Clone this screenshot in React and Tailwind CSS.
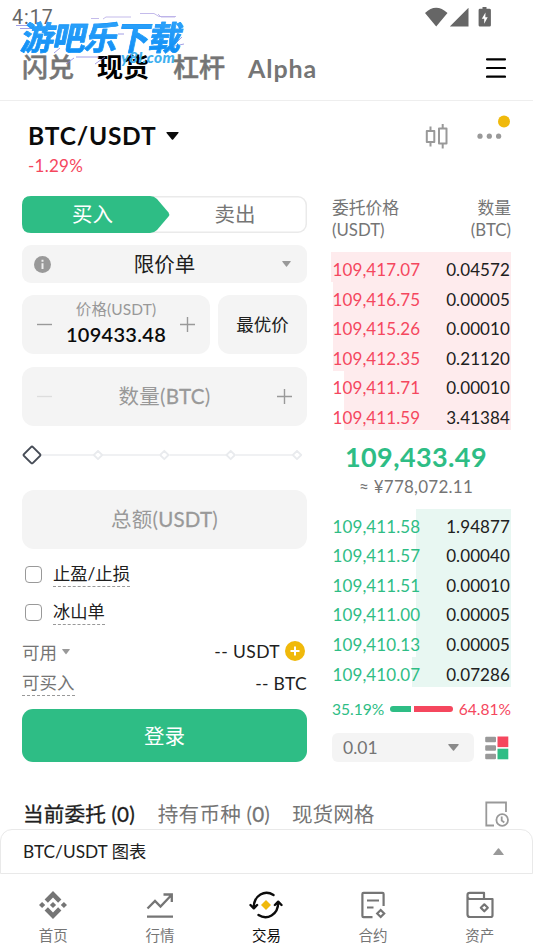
import React from "react";

const asks = [
  ["109,417.07", "0.04572", "w-[180px]"],
  ["109,416.75", "0.00005", "w-[178px]"],
  ["109,415.26", "0.00010", "w-[178px]"],
  ["109,412.35", "0.21120", "w-[178px]"],
  ["109,411.71", "0.00010", "w-[167px]"],
  ["109,411.59", "3.41384", "w-[167px]"],
];

const bids = [
  ["109,411.58", "1.94877", "w-[95px]"],
  ["109,411.57", "0.00040", "w-[95px]"],
  ["109,411.51", "0.00010", "w-[95px]"],
  ["109,411.00", "0.00005", "w-[95px]"],
  ["109,410.13", "0.00005", "w-[95px]"],
  ["109,410.07", "0.07286", "w-[99px]"],
];

function Caret({ w, h, className = "", up = false }) {
  return (
    <svg width={w} height={h} viewBox="0 0 12 8" preserveAspectRatio="none" className={className}>
      <path
        d={up ? "M1 8h10q1.2 0 .5-1L6.6.6Q6 0 5.4.6L.5 7Q-.2 8 1 8z" : "M1 0h10q1.2 0 .5 1L6.6 7.4Q6 8 5.4 7.4L.5 1Q-.2 0 1 0z"}
        fill="currentColor"
      />
    </svg>
  );
}

function Sign({ plus = false, className = "" }) {
  return (
    <svg width="15" height="15" viewBox="0 0 15 15" className={className}>
      <path d={plus ? "M0 7.5h15M7.5 0v15" : "M0 7.5h15"} stroke="currentColor" strokeWidth="1.4" fill="none" />
    </svg>
  );
}

function Watermark() {
  return (
    <div className="pointer-events-none absolute left-0 top-0 h-[70px] w-[200px]">
      <svg width="200" height="70" viewBox="0 0 200 70" fill="none" className="absolute left-0 top-0">
        <g stroke="#b5a9e6" strokeWidth="0.8">
          <path d="M91 18.500h8M103 19l3-2h25M140 13.500h14l5 3h17M158 14l3 3h14" />
          <path d="M16 25.500h18M20 28.500h18M54 53l6-5M76 57h23M74 58l-8 6M105 57l-10 7M182 37l-7 7M184 44l-14 3M118 34h6" stroke="#8a86df" />
        </g>
      </svg>
      <div className="absolute left-[18px] top-[17px] flex origin-bottom -skew-x-12 bg-gradient-to-b from-[#2fa4fb] to-[#078cf5] bg-clip-text text-[33px] font-bold leading-[40px] tracking-[-1.100px] text-transparent [-webkit-text-stroke:0.600px_#1797f8]">
        游吧乐下载
      </div>
      <div className="absolute left-[121px] top-[49px] text-[15.500px] font-black italic leading-[16px] tracking-[0.400px] text-[#3fb0ef]">
        y8l.com
      </div>
    </div>
  );
}

function Book({ rows, side }) {
  const red = side === "ask";
  return (
    <div className="flex w-[180px] flex-col">
      {rows.map(([p, q, w]) => (
        <div key={p} className="grid h-[29.600px]">
          <div className={`col-start-1 row-start-1 h-full justify-self-end ${w} ${red ? "bg-[#feebed]" : "bg-[#e8f7f2]"}`} />
          <div className="col-start-1 row-start-1 flex justify-between pt-[6px] pl-[1.500px] pr-[1px] text-[17px] leading-[24px]">
            <span className={`tracking-[0.100px] ${red ? "text-[#f5475e]" : "text-[#2fbd85]"}`}>{p}</span>
            <span className="tracking-[0.100px] text-[#202020]">{q}</span>
          </div>
        </div>
      ))}
    </div>
  );
}

function CheckRow({ label }) {
  return (
    <div className="flex h-[38px] items-center pl-[3px]">
      <span className="h-[17px] w-[17px] rounded-[4px] border-[1.500px] border-[#999]" />
      <span className="ml-[11px] h-[25px] border-b border-dashed border-[#999] text-[17.300px] leading-[23px] text-[#202020]">{label}</span>
    </div>
  );
}

const navIcons = {
  home: (
    <svg width="28" height="28" viewBox="0 0 28 28" fill="#757575">
      <path d="M14 0l8.400 8.400-3.300 3.300L14 6.600l-5.100 5.100-3.300-3.300zM14 28l-8.400-8.400 3.300-3.300 5.100 5.100 5.100-5.100 3.300 3.300zM0 14l3.100-3.100L6.200 14l-3.100 3.100zM10.900 14l3.100-3.100 3.100 3.100-3.100 3.100zM21.800 14l3.100-3.100L28 14l-3.100 3.100z" />
    </svg>
  ),
  market: (
    <svg width="28" height="28" viewBox="0 0 28 28" fill="none" stroke="#757575" strokeWidth="2.300">
      <path d="M1.500 17.500L9 10l5.500 5.500L25 4.500M17.500 3.500h8.300v7.500M1 25.700h26" />
    </svg>
  ),
  trade: (
    <svg width="34" height="28" viewBox="0 0 34 28" fill="none" stroke="#0b0b0b" strokeWidth="2.400" strokeLinecap="round" strokeLinejoin="round">
      <path d="M24.500 4C16 -1.500 4.800 4 4.800 16.500M1.500 14l3.300 3.300 3.300-3.300M9.500 24C18 29.500 29.200 24 29.200 11.500M25.900 14l3.300-3.300 3.300 3.300" />
      <path d="M17 9l5 5-5 5-5-5z" fill="#f0b90b" stroke="none" />
    </svg>
  ),
  futures: (
    <svg width="28" height="28" viewBox="0 0 28 28" fill="none" stroke="#757575" strokeWidth="2.200">
      <path d="M13.500 26.200H4.500Q3.400 26.200 3.400 25.100V3Q3.400 1.900 4.500 1.900H23.500Q24.600 1.900 24.600 3V15M8 9.500h12M8 16.500h6.500" />
      <path d="M21.700 19l3.500 3.500-3.500 3.500-3.500-3.500z" />
    </svg>
  ),
  wallet: (
    <svg width="28" height="28" viewBox="0 0 28 28" fill="none" stroke="#757575" strokeWidth="2.200" strokeLinejoin="round">
      <path d="M1.500 8V4Q1.500 1.800 3.700 1.800H18V7.500M1.500 5.500Q1.500 8 4 8H26.500V24.300Q26.500 26 24.800 26H4Q1.500 26 1.500 23.500V5" />
      <path d="M18.300 13.300l3.500 3.500-3.500 3.500-3.500-3.500z" />
    </svg>
  ),
};

const nav = [
  ["home", "首页"],
  ["market", "行情"],
  ["trade", "交易"],
  ["futures", "合约"],
  ["wallet", "资产"],
];

export default function App() {
  return (
    <div className="relative flex h-[948px] w-[533px] flex-col overflow-hidden bg-white font-['Lato','Noto_Sans_CJK_SC',sans-serif] text-[#202020]">
      {/* status bar */}
      <div className="flex h-[36px] shrink-0 justify-between pl-[12px] pr-[41px]">
        <span className="mt-[6px] font-['Roboto',sans-serif] text-[19.500px] leading-[24px] tracking-[1px] text-[#666]">4:17</span>
        <div className="flex pt-[7px] text-[#666]">
          <svg width="67" height="20" viewBox="0 0 67 20" fill="currentColor">
            <path d="M0 6Q11-4.500 22.500 6L11.200 19.500zM43.500.8V19.500H24.800zM57.500 0h4v1.800h3q1.400 0 1.400 1.400v15q0 1.400-1.400 1.400h-9.500q-1.400 0-1.400-1.400v-15q0-1.400 1.400-1.400h2.500z" />
            <path d="M60.500 5.500L56.800 11.800h2.400v5l3.500-6.600h-2.400z" fill="#fff" />
          </svg>
        </div>
      </div>

      {/* main tabs */}
      <div className="flex h-[65px] shrink-0 items-center border-b border-[#eee] pb-[2px] pl-[22px] pr-[27px] text-[26px] font-medium leading-[36px] text-[#757575]">
        <span className="[-webkit-text-stroke:0.5px]">闪兑</span>
        <span className="ml-[23px] font-bold text-black">现货</span>
        <span className="ml-[24px] [-webkit-text-stroke:0.5px]">杠杆</span>
        <span className="ml-[23px] mt-[1px] text-[25px] font-bold tracking-[0.900px]">Alpha</span>
        <svg width="20" height="20" viewBox="0 0 20 20" className="ml-auto mt-[2px]">
          <path d="M1 1.300h18M1 10h18M1 18.700h18" stroke="#000" strokeWidth="2.200" strokeLinecap="round" />
        </svg>
      </div>

      {/* pair heading */}
      <div className="flex h-[95px] shrink-0 justify-between pl-[28px] pr-[22px]">
        <div className="flex flex-col pt-[18px]">
          <div className="flex items-center">
            <span className="text-[24.500px] font-bold leading-[34px] tracking-[0.800px] text-[#0b0b0b]">BTC/USDT</span>
            <Caret w={13} h={8} className="ml-[10px] text-[#0b0b0b]" />
          </div>
          <span className="mt-[1px] text-[17px] leading-[24px] tracking-[0.250px] text-[#f5475e]">-1.29%</span>
        </div>
        <div className="flex pt-[14px]">
          <svg width="24" height="26" viewBox="0 0 24 26" fill="none" stroke="#999" strokeWidth="2" strokeLinejoin="round" className="mt-[9px]">
            <path d="M1.800 7h7.500v11h-7.500zM5.500 2.500v4M5.500 18.500v4M14 4.500h7.500v15H14zM17.700 0v4M17.700 20v4.500" />
          </svg>
          <svg width="36" height="28" viewBox="0 0 36 28" className="ml-[26px]">
            <g fill="#999">
              <circle cx="5" cy="21.200" r="2.600" /><circle cx="14.300" cy="21.200" r="2.600" /><circle cx="23.600" cy="21.200" r="2.600" />
            </g>
            <circle cx="29" cy="6.500" r="6" fill="#f0b90b" />
          </svg>
        </div>
      </div>

      <div className="flex h-[588px] shrink-0 pl-[22px]">
        {/* order form */}
        <div className="flex w-[285px] flex-col">
          <div className="grid h-[37px] grid-cols-[148px_137px] rounded-[9px] shadow-[inset_0_0_0_1.500px_#eaeaea]">
            <div className="grid">
              <svg width="148" height="37" viewBox="0 0 148 37" className="col-start-1 row-start-1">
                <path d="M9 0H128Q132 0 135 3L146.500 16.500Q148 18.500 146.500 20.500L135 34Q132 37 128 37H9Q0 37 0 28V9Q0 0 9 0z" fill="#2ebd85" />
              </svg>
              <span className="col-start-1 row-start-1 pr-[7px] text-center text-[20.500px] leading-[37px] text-white">买入</span>
            </div>
            <span className="pl-[20px] pr-[27px] text-center text-[20.500px] leading-[37px] text-[#757575]">卖出</span>
          </div>

          <div className="mt-[12px] flex h-[38px] items-center justify-between rounded-[9px] bg-[#f4f4f4] pl-[12px] pr-[16px]">
            <svg width="17" height="17" viewBox="0 0 17 17">
              <circle cx="8.500" cy="8.500" r="8.500" fill="#999" />
              <path d="M8.500 3.800v2M8.500 7.300v5.700" stroke="#eee" strokeWidth="2" />
            </svg>
            <span className="pr-[4px] text-[20.500px] leading-[36px] text-[#202020]">限价单</span>
            <Caret w={9} h={6} className="text-[#999]" />
          </div>

          <div className="mt-[12px] flex h-[59px] gap-[8px]">
            <div className="flex w-[188px] items-center justify-between rounded-[12px] bg-[#f4f4f4] px-[15px]">
              <Sign className="text-[#999]" />
              <div className="flex flex-col items-center pb-[2px]">
                <span className="text-[15.500px] leading-[22px] tracking-[0.100px] text-[#999]">价格(USDT)</span>
                <span className="-mt-[1px] text-[20px] font-semibold leading-[30px] tracking-[0.300px] text-[#0b0b0b]">109433.48</span>
              </div>
              <Sign plus className="text-[#999]" />
            </div>
            <div className="flex w-[89px] items-center justify-center rounded-[12px] bg-[#f4f4f4] text-[17.500px] leading-[26px]">最优价</div>
          </div>

          <div className="mt-[12.500px] flex h-[59px] items-center justify-between rounded-[12px] bg-[#f4f4f4] px-[15px]">
            <Sign className="text-[#ddd]" />
            <span className="text-[20.500px] leading-[30px] tracking-[0.250px] text-[#999]">数量(<span className="[-webkit-text-stroke:0.3px]">BTC</span>)</span>
            <Sign plus className="text-[#999]" />
          </div>

          <svg width="285" height="20" viewBox="0 0 285 20" fill="none" className="mt-[19.500px]">
            <path d="M20 10h51M81 10h56.500M147.500 10H204M214 10h56.500" stroke="#ebedf0" strokeWidth="1.300" />
            <g stroke="#e9ebee" strokeWidth="1.800" strokeLinejoin="round">
              <path d="M76 5.800l4.200 4.200-4.200 4.200-4.200-4.200zM142.300 5.800l4.200 4.200-4.200 4.200-4.200-4.200zM208.700 5.800l4.200 4.200-4.200 4.200-4.200-4.200zM275 5.800l4.200 4.200-4.200 4.200-4.200-4.200z" />
            </g>
            <path d="M9 2.100q1-1 2 0l7 7q.8.900 0 1.800L11 17.900q-1 1-2 0L2 10.900q-.8-.9 0-1.800z" stroke="#474d57" strokeWidth="2" />
          </svg>

          <div className="mt-[25px] flex h-[59px] items-center justify-center rounded-[12px] bg-[#f4f4f4] pb-[1px] text-[20.500px] leading-[30px] tracking-[0.200px] text-[#999]">总额(<span className="[-webkit-text-stroke:0.3px]">USDT</span>)</div>

          <div className="mt-[6px] flex flex-col">
            <CheckRow label="止盈/止损" />
            <CheckRow label="冰山单" />
          </div>

          <div className="mt-[8px] flex h-[26px] items-center text-[17.500px] leading-[26px]">
            <span className="pt-[1px] text-[#757575]">可用</span>
            <Caret w={8} h={5.500} className="ml-[5px] text-[#999]" />
            <span className="ml-auto tracking-[0.400px]">-- USDT</span>
            <svg width="20" height="20" viewBox="0 0 20 20" className="mb-[2px] ml-[5px] mr-[2px]">
              <circle cx="10" cy="10" r="10" fill="#f0b90b" />
              <path d="M5.500 10h9M10 5.500v9" stroke="#fff" strokeWidth="2" />
            </svg>
          </div>
          <div className="mt-[5px] flex h-[26px] items-start justify-between text-[17.500px] leading-[25px]">
            <span className="h-[26px] border-b border-dashed border-[#999] text-[#757575]">可买入</span>
            <span className="pt-[1px] tracking-[0.300px]">-- BTC</span>
          </div>
          <button className="mt-[13px] h-[53px] shrink-0 rounded-[11px] bg-[#2ebd85] text-[20.500px] leading-[30px] text-white">登录</button>
        </div>

        {/* order book */}
        <div className="ml-[24px] flex w-[180px] flex-col">
          <div className="flex h-[56px] justify-between pl-[1px] pt-[1px] text-[16.800px] leading-[22px] text-[#757575]">
            <span>委托价格<br />(USDT)</span>
            <span className="text-right">数量<br />(BTC)</span>
          </div>
          <Book rows={asks} side="ask" />
          <div className="flex h-[79px] flex-col items-center pr-[10px] pt-[9px]">
            <span className="text-[27px] font-bold leading-[36px] tracking-[0.400px] text-[#2ebd85]">109,433.49</span>
            <span className="text-[17px] leading-[24px] tracking-[0.250px] text-[#757575]">≈ ¥778,072.11</span>
          </div>
          <Book rows={bids} side="bid" />
          <div className="mt-[10px] flex h-[26px] items-center justify-between pl-[1px] text-[15.600px] leading-[24px]">
            <span className="text-[#2ebd85]">35.19%</span>
            <span className="flex gap-[3px]">
              <span className="h-[6px] w-[21px] rounded-l-full bg-[#2ebd85]" />
              <span className="h-[6px] w-[39px] rounded-r-full bg-[#f5475e]" />
            </span>
            <span className="text-[#f5475e]">64.81%</span>
          </div>
          <div className="mt-[11px] flex h-[29px] items-center pl-[1px]">
            <div className="flex h-[29px] w-[142px] items-center justify-between rounded-[6px] bg-[#f4f4f4] pl-[11px] pr-[15px] text-[17.500px] text-[#757575]">
              0.01
              <Caret w={11} h={7} className="text-[#8a8a8a]" />
            </div>
            <svg width="24" height="24" viewBox="0 0 24 24" className="ml-[11px]">
              <path d="M1.200.8h8.800q1 0 1 1v3.500q0 1-1 1H1.200q-1 0-1-1V1.800q0-1 1-1zM1.200 9.300h8.800q1 0 1 1v3.500q0 1-1 1H1.200q-1 0-1-1v-3.500q0-1 1-1zM1.200 17.800h8.800q1 0 1 1v3.500q0 1-1 1H1.200q-1 0-1-1v-3.500q0-1 1-1z" fill="#999" />
              <path d="M12.500.5h10.800v10.600H12.500z" fill="#f5475e" />
              <path d="M12.500 12.700h10.800v10.600H12.500z" fill="#2ebd85" />
            </svg>
          </div>
        </div>
      </div>

      {/* order tabs */}
      <div className="flex h-[45px] shrink-0 items-center pl-[23px] pr-[24px] pt-[15px] text-[20.600px] leading-[30px] text-[#757575]">
        <span className="tracking-[0.150px] text-[#202020] [-webkit-text-stroke:0.3px]">当前委托 (0)</span>
        <span className="ml-[23px] tracking-[0.200px]">持有币种 (<span className="[-webkit-text-stroke:0.3px]">0</span>)</span>
        <span className="ml-[22px]">现货网格</span>
        <svg width="24" height="26" viewBox="0 0 24 26" fill="none" stroke="#999" strokeWidth="1.800" className="ml-auto">
          <path d="M9 24.500H1.300V1.500H21V11M16.700 15.500v4l2.600 2" />
          <circle cx="17.200" cy="19" r="5.800" />
        </svg>
      </div>

      <div className="flex h-[45px] shrink-0 items-center justify-between rounded-t-[12px] border border-[#e9e9e9] bg-white pl-[22px] pr-[28px] text-[17.300px] leading-[26px]">
        <span>BTC/USDT 图表</span>
        <Caret w={11} h={7} up className="text-[#999]" />
      </div>

      {/* bottom navigation */}
      <div className="grid h-[74px] shrink-0 grid-cols-5 pt-[17px]">
        {nav.map(([id, label]) => (
          <div key={id} className="flex flex-col items-center">
            {navIcons[id]}
            <span className={`mt-[6px] text-[14.500px] leading-[22px] ${id === "trade" ? "text-[#0b0b0b]" : "text-[#757575]"}`}>{label}</span>
          </div>
        ))}
      </div>

      <Watermark />
    </div>
  );
}
